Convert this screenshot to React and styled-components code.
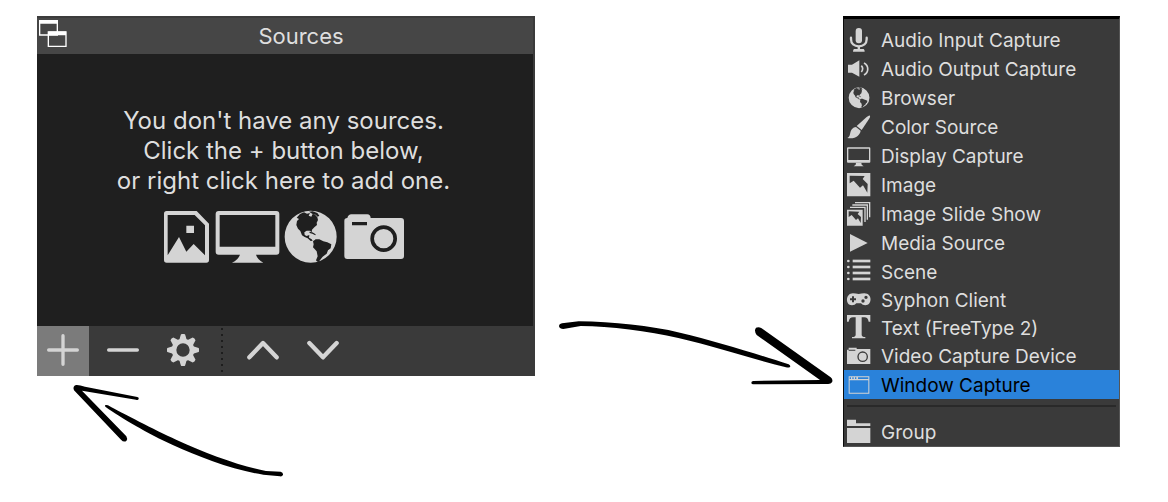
import React from "react";
import styled, { createGlobalStyle, css } from "styled-components";

const GlobalStyle = createGlobalStyle`
  * { box-sizing: border-box; }
  body {
    margin: 0;
    background: #fff;
    font-family: Inter, "Liberation Sans", sans-serif;
  }
`;

const Page = styled.main`
  display: grid;
  grid-template-columns: 498fr 308fr 277fr;
  align-items: start;
  padding: 16px 48px 0 37px;
`;

const Panel = styled.section`
  background: #3a3a3a;
`;

const PanelHeader = styled.header`
  display: grid;
  grid-template-columns: 32px 1fr;
  align-items: center;
  height: 38px;
  margin-right: 2px;
  border-top: 2px solid #3c3c3c;
  background: #464646;
`;

const DockButton = styled.button`
  display: flex;
  align-self: start;
  padding: 2px 0 0 2px;
  border: 0;
  background: none;
`;

const PanelTitle = styled.h1`
  margin: 0;
  color: #dedede;
  font-size: 22px;
  font-weight: 400;
  line-height: 30px;
  text-align: center;
`;

const PanelBody = styled.div`
  display: flex;
  flex-direction: column;
  align-items: center;
  height: 272px;
  margin-right: 2px;
  padding: 52px 3px 0 0;
  background: #1f1f1f;
`;

const EmptyText = styled.p`
  margin: 0;
  color: #dedede;
  font-size: 24px;
  line-height: 30px;
  text-align: center;
  white-space: nowrap;
`;

const SourceIcons = styled.svg`
  display: block;
  margin-top: 14px;
`;

const Toolbar = styled.div`
  display: flex;
  gap: 8px;
  height: 50px;
`;

const ToolButton = styled.button`
  display: flex;
  align-items: center;
  justify-content: center;
  width: 52px;
  padding: 0 0 2px;
  border: 0;
  background: ${(p) => (p.$active ? "#7b7b7b" : "none")};
`;

const ToolDivider = styled.span`
  width: 12px;
  margin: 0 0 2px;
  background: radial-gradient(circle, #1d1d1d 1px, transparent 1px) 0 0 / 10px 6px repeat-y;
`;

const LowerArrow = styled.svg`
  display: block;
  margin-left: 23px;
`;

const MiddleArrow = styled.svg`
  display: block;
  margin: 294px 3px 0 auto;
  overflow: visible;
`;

const Menu = styled.ul`
  margin: 0;
  padding: 6px 0 0;
  border-style: solid;
  border-width: 3px 1px 1px;
  border-color: #000 #555 #555 #0b0b0b;
  background: #3a3a3a;
  list-style: none;
`;

const MenuButton = styled.button`
  display: flex;
  align-items: center;
  gap: 10px;
  width: 100%;
  height: 29px;
  padding: 0 3px;
  border: 0;
  background: none;
  color: #dedede;
  font-family: inherit;
  font-size: 19px;
  line-height: 26px;
  text-align: left;
  white-space: nowrap;

  ${(p) => p.$compact && css`height: 28px;`}
  ${(p) => p.$selected && css`
    background: #2a82da;
    color: #000;
  `}
`;

const MenuLabel = styled.span`
  padding-top: 2px;
`;

const MenuSeparator = styled.li`
  height: 2px;
  margin: 6px 3px 10px;
  background: #292929;
`;

const Glyph = styled.svg`
  flex: none;
  width: 24px;
  height: 24px;
  overflow: visible;
`;

const GLOBE =
  "M78 0A78 78 0 1 0 78 156A78 78 0 1 0 78 0Z" +
  "M36 21L46 10L58 5L67 9L76 7L72 15L80 18L84 10L92 13L98 20L100 28L96 36L97 43L89 50L82 57L81 65L76 60L66 60L59 65L60 73L66 76L74 73L73 81L81 86L84 90L78 91L69 83L60 79L52 74L47 61L40 54L35 43L37 31L43 25Z" +
  "M73 3L84 2L98 7L104 15L99 18L93 12L84 10Z" +
  "M74 63L83 65L93 71L92 74L83 69L75 67Z" +
  "M85 92L93 86L104 86L116 92L128 95L140 101L138 113L130 119L126 129L114 138L104 151L98 154L94 149L99 137L96 122L85 110L87 101Z";

function SmallIcon({ name }) {
  return (
    <Glyph viewBox="0 0 72 72" fill="#d4d4d4" aria-hidden="true">
      {SMALL_ICONS[name]}
    </Glyph>
  );
}

const SMALL_ICONS = {
  mic: (
    <>
      <rect x="26" y="0" width="19" height="46" rx="9" />
      <path d="M12 29V34C12 47 22 55 35.500 55S59 47 59 34V29" fill="none" stroke="#d4d4d4" strokeWidth="7" strokeLinecap="round" />
      <path d="M32 54H39V63H50Q53 65 53 71H18Q18 65 21 63H32Z" />
    </>
  ),
  speaker: (
    <>
      <path d="M3 23H15L37 10V59L15 47H3Z" />
      <path d="M43 26Q51 35 43 45M51 18C66 26 66 46 51 54" fill="none" stroke="#d4d4d4" strokeWidth="5" />
    </>
  ),
  globe: <path d={GLOBE} fillRule="evenodd" transform="translate(5 4) scale(.4)" />,
  brush: (
    <>
      <path d="M69 2Q71 4 66 12L44 45L29 33L59 6Q66 0 69 2Z" />
      <path d="M27 36L41 47C39 60 26 73 1 69C12 64 7 51 15 42Q20 36 27 36Z" />
    </>
  ),
  display: (
    <>
      <path d="M3 10H67Q70 10 70 13V53Q70 56 67 56H3Q0 56 0 53V13Q0 10 3 10ZM4 14V48H66V14Z" fillRule="evenodd" />
      <path d="M27 56H43L44 62L50 67H20L26 62Z" />
    </>
  ),
  image: (
    <path d="M0 0H70V70H0ZM8 8V31L20 23L39 44L48 37L61 59L62 33L47 18L53 9Z" fillRule="evenodd" />
  ),
  slides: (
    <>
      <path d="M24 2H68V46M16 9H61V53M9 16H54V60" fill="none" stroke="#d4d4d4" strokeWidth="4" />
      <path d="M0 23H47V71H0ZM5 28V45L14 39L27 54L33 49L41 63L42 45L32 36L37 29Z" fillRule="evenodd" />
    </>
  ),
  play: <path d="M9 9L62 36L9 62Z" />,
  list: (
    <>
      {[3, 21, 39, 57].map((y) => (
        <g key={y}>
          <circle cx="4" cy={y} r="4" />
          <rect x="17" y={y - 4} width="53" height="8" />
        </g>
      ))}
    </>
  ),
  gamepad: (
    <path
      d="M18 16Q26 16 35 18Q44 16 52 16C77 16 76 52 55 52Q46 52 42 46H28Q24 52 15 52C-6 52-5 16 18 16ZM15 25V31H9V37H15V43H21V37H27V31H21V25ZM57 23A5 5 0 1 0 57 33A5 5 0 1 0 57 23ZM48 34A5 5 0 1 0 48 44A5 5 0 1 0 48 34Z"
      fillRule="evenodd"
    />
  ),
  type: (
    <path d="M0-3H70V17H65Q63 4 52 4H44V56Q44 63 55 63V67H15V63Q26 63 26 56V4H18Q7 4 5 17H0Z" />
  ),
  camera: (
    <path
      d="M0 17H5V11H29V15H70V60H0ZM5 17V20H25V17ZM47 22A16 16 0 1 0 47 54A16 16 0 1 0 47 22ZM47 26A12 12 0 1 1 47 50A12 12 0 1 1 47 26Z"
      fillRule="evenodd"
    />
  ),
  window: (
    <path
      d="M5 10H67V62H5ZM8 22V59H64V22ZM8 13V18H12V13ZM16 13V18H20V13ZM24 13V18H28V13ZM33 13V18H64V13Z"
      fillRule="evenodd"
    />
  ),
  folder: <path d="M0-1H27V10H70V18H0ZM0 24H70V69H0Z" />,
};

const SOURCES = [
  { label: "Audio Input Capture", icon: "mic" },
  { label: "Audio Output Capture", icon: "speaker" },
  { label: "Browser", icon: "globe" },
  { label: "Color Source", icon: "brush" },
  { label: "Display Capture", icon: "display" },
  { label: "Image", icon: "image" },
  { label: "Image Slide Show", icon: "slides" },
  { label: "Media Source", icon: "play" },
  { label: "Scene", icon: "list" },
  { label: "Syphon Client", icon: "gamepad", compact: true },
  { label: "Text (FreeType 2)", icon: "type", compact: true },
  { label: "Video Capture Device", icon: "camera", compact: true },
  { label: "Window Capture", icon: "window", selected: true },
];

function ToolIcon({ children }) {
  return (
    <svg width="32" height="32" viewBox="0 0 96 96" fill="none" stroke="#d4d4d4" strokeLinecap="round" strokeLinejoin="round" aria-hidden="true">
      {children}
    </svg>
  );
}

function Gear() {
  return (
    <ToolIcon>
      <circle cx="48" cy="48" r="27" strokeWidth="14" />
      {[0, 45, 90, 135, 180, 225, 270, 315].map((a) => (
        <path key={a} d="M36 20L42 1Q48-2 54 1L60 20Z" fill="#d4d4d4" stroke="none" transform={`rotate(${a} 48 48)`} />
      ))}
    </ToolIcon>
  );
}

export default function App() {
  return (
    <>
      <GlobalStyle />
      <Page>
        <div>
          <Panel>
            <PanelHeader>
              <DockButton aria-label="Undock">
                <svg width="28" height="28" viewBox="0 0 84 84" fill="none" stroke="#fff" strokeWidth="4" aria-hidden="true">
                  <path d="M2 2H55V45H2ZM28 36H81V79H28Z" fill="#464646" />
                  <path d="M2 6H55M28 40H81" strokeWidth="11" />
                </svg>
              </DockButton>
              <PanelTitle>Sources</PanelTitle>
            </PanelHeader>
            <PanelBody>
              <EmptyText>
                You don't have any sources.
                <br />
                Click the + button below,
                <br />
                or right click here to add one.
              </EmptyText>
              <SourceIcons width="240" height="54" viewBox="42 30 720 162" fill="#d4d4d4" fillRule="evenodd" aria-hidden="true">
                <path d="M50 33H140L177 71V180Q177 188 169 188H50Q42 188 42 180V41Q42 33 50 33ZM53 45V166L87 111L109 155L131 132L165 166V76L134 45ZM109 77H132V99H109Z" />
                <path d="M206 33H379Q388 33 388 42V155Q388 164 379 164H318Q322 178 340 188H246Q264 180 270 164H206Q197 164 197 155V42Q197 33 206 33ZM209 45V140H376V45Z" />
                <path d={GLOBE} transform="translate(404 32)" />
                <path d="M583 62Q583 55 592 54Q595 43 604 43H652Q661 43 662 54H753Q762 54 762 63V168Q762 177 753 177H592Q583 177 583 168ZM606 66V76H651V66ZM701 76A40 40 0 1 0 701 156A40 40 0 1 0 701 76ZM701 87A29 29 0 1 1 701 145A29 29 0 1 1 701 87Z" />
              </SourceIcons>
            </PanelBody>
            <Toolbar>
              <ToolButton $active aria-label="Add source">
                <ToolIcon><path d="M48 5V91M5 48H91" strokeWidth="10" /></ToolIcon>
              </ToolButton>
              <ToolButton aria-label="Remove source">
                <ToolIcon><path d="M5 48H91" strokeWidth="10" /></ToolIcon>
              </ToolButton>
              <ToolButton aria-label="Source properties"><Gear /></ToolButton>
              <ToolDivider />
              <ToolButton aria-label="Move up">
                <ToolIcon><path d="M7 70L48 27L89 70" strokeWidth="13" /></ToolIcon>
              </ToolButton>
              <ToolButton aria-label="Move down">
                <ToolIcon><path d="M7 27L48 70L89 27" strokeWidth="13" /></ToolIcon>
              </ToolButton>
            </Toolbar>
          </Panel>
          <LowerArrow width="240" height="109" viewBox="0 3 720 327" aria-hidden="true">
            <path d="M48 30Q57 29 75 35L232 66Q238 68 236 72Q234 76 228 74L66 47L199 184Q204 192 199 198Q191 203 183 194L42 46Q37 34 48 30Z" />
            <path d="M135 91Q138 89 144 91C190 116 280 163 350 195C435 235 550 276 618 288L662 290Q670 293 669 299Q667 305 660 304L610 299C520 286 415 245 340 211C265 177 180 127 138 97Q134 94 135 91Z" />
          </LowerArrow>
        </div>
        <MiddleArrow width="290" height="90" viewBox="0 0 870 270" aria-hidden="true">
          <path d="M36 40L86 34C190 35 300 47 390 68C500 94 620 132 716 163Q723 168 720 171Q716 174 708 172C600 145 500 111 385 84C295 63 180 48 92 48L40 57Q29 57 27 49Q27 42 36 40Z" />
          <path d="M618 53Q626 49 635 55L842 202Q850 208 846 217Q842 223 832 222L610 223Q604 223 604 218Q604 214 610 213L810 210L620 75Q611 62 618 53Z" />
        </MiddleArrow>
        <Menu>
          {SOURCES.map((s) => (
            <li key={s.label}>
              <MenuButton $compact={s.compact} $selected={s.selected}>
                <SmallIcon name={s.icon} />
                <MenuLabel>{s.label}</MenuLabel>
              </MenuButton>
            </li>
          ))}
          <MenuSeparator role="separator" />
          <li>
            <MenuButton>
              <SmallIcon name="folder" />
              <MenuLabel>Group</MenuLabel>
            </MenuButton>
          </li>
        </Menu>
      </Page>
    </>
  );
}
